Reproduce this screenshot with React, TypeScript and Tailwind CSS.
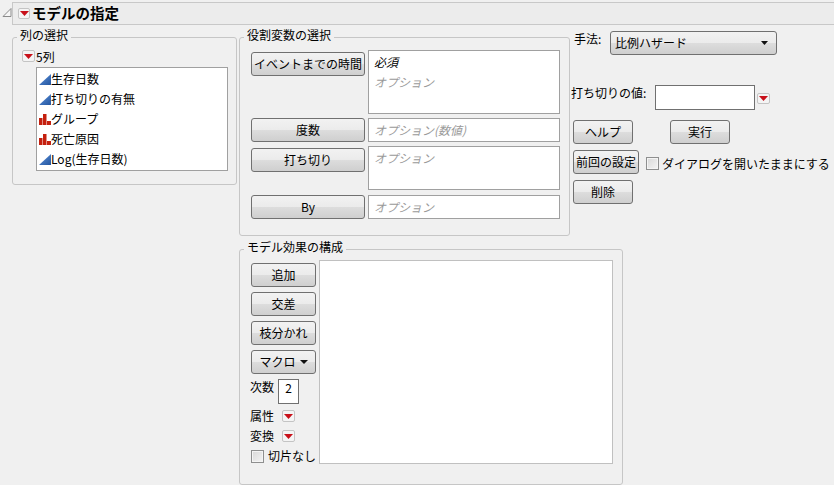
import React from 'react';

const font = { fontFamily: '"Noto Sans CJK JP", "Liberation Sans", sans-serif' };

const btnBase = 'flex h-[24px] shrink-0 items-center whitespace-nowrap rounded-[3px] border border-[#707070] bg-[linear-gradient(#f2f2f2_0%,#ebebeb_50%,#dddddd_50%,#cfcfcf_100%)] text-[12px] leading-none text-black';

const RedMenu: React.FC<{ className?: string }> = ({ className = 'h-[12px] w-[13px]' }) => (
  <span className={`flex shrink-0 items-center justify-center rounded-[2px] border border-[#c4c4c4] bg-[#f4f4f4] ${className}`}>
    <svg width="9" height="5" viewBox="0 0 9 5">
      <path d="M0 0h9L4.5 5z" fill="#c8101a" />
    </svg>
  </span>
);

const Btn: React.FC<{ className?: string; children: React.ReactNode }> = ({ className = '', children }) => (
  <button className={`${btnBase} justify-center ${className}`}>{children}</button>
);

const Group: React.FC<{ title: string; className?: string; children: React.ReactNode }> = ({ title, className = '', children }) => (
  <fieldset className={`shrink-0 rounded-[3px] border border-[#c6c6c6] ${className}`}>
    <legend className="ml-[4px] px-[3px] text-[12px] leading-[14px] text-black">
      <span className="block -translate-y-[2px]">{title}</span>
    </legend>
    {children}
  </fieldset>
);

const Continuous = () => (
  <svg width="12" height="11" viewBox="0 0 12 11" className="shrink-0">
    <defs>
      <linearGradient id="cont" x1="0" y1="0" x2="1" y2="1">
        <stop offset="0" stopColor="#5f93dc" />
        <stop offset="1" stopColor="#23559f" />
      </linearGradient>
    </defs>
    <path d="M0 11L12 0v11z" fill="url(#cont)" />
  </svg>
);

const Nominal = () => (
  <svg width="12" height="11" viewBox="0 0 12 11" className="shrink-0">
    <path d="M0 4h3.5v7H0zM4 0h3.5v11H4zM8 7h4v4H8z" fill="#c4200f" />
  </svg>
);

const Check: React.FC<{ className?: string }> = ({ className = '' }) => (
  <span className={`h-[13px] w-[13px] shrink-0 border border-[#8e8f8f] bg-[linear-gradient(135deg,#d8d8d8,#f4f4f4)] shadow-[inset_0_0_0_1px_#f4f4f4] ${className}`} />
);

const columns = [
  { name: '生存日数', icon: <Continuous /> },
  { name: '打ち切りの有無', icon: <Continuous /> },
  { name: 'グループ', icon: <Nominal /> },
  { name: '死亡原因', icon: <Nominal /> },
  { name: 'Log(生存日数)', icon: <Continuous /> },
];

const Hint: React.FC<{ children: React.ReactNode }> = ({ children }) => <p className="-mt-[2px] italic leading-[17px] text-[#9a9a9a]">{children}</p>;

const App: React.FC = () => (
  <div style={font} className="h-[485px] w-[834px] overflow-hidden bg-[#f0f0f0] text-[12px] text-black">
    {/* title bar */}
    <div className="flex h-[25px] items-start pt-[2px]">
      <svg width="9" height="9" viewBox="0 0 9 9" className="ml-[2px] mt-[6px] w-[10px] shrink-0">
        <path d="M8.5 0.5v8h-8z" fill="#f6f6f6" stroke="#8a8a8a" />
      </svg>
      <div className="flex h-[23px] flex-1 items-center border border-r-0 border-[#c8c8c8] bg-[#ececec] pl-[5px]">
        <RedMenu className="h-[11px] w-[12px]" />
        <span className="ml-[2px] text-[14.5px] font-bold leading-none">モデルの指定</span>
      </div>
    </div>

    <div className="pl-[12px] pt-[5px]">
      <div className="flex items-start">
        {/* columns */}
        <Group title="列の選択" className="h-[155px] w-[225px]">
          <div className="pl-[9px] pt-[6px]">
            <div className="flex h-[12px] items-center">
              <RedMenu />
              <span className="ml-[1px] mt-[2px]">5列</span>
            </div>
            <ul className="ml-[14px] mt-[5px] h-[104px] w-[192px] border border-[#a0a0a0] bg-white pt-[1px]">
              {columns.map(c => (
                <li key={c.name} className="flex h-[20px] items-center pl-[2px]">
                  {c.icon}
                  <span className="leading-none">{c.name}</span>
                </li>
              ))}
            </ul>
          </div>
        </Group>

        {/* roles */}
        <Group title="役割変数の選択" className="ml-[2px] h-[206px] w-[331px]">
          <div className="flex flex-col pl-[11px] pt-[6px]">
            <div className="flex h-[68px] gap-[3px]">
              <Btn className="mt-[2px] w-[114px]">イベントまでの時間</Btn>
              <div className="h-[64px] w-[192px] border border-[#a0a0a0] bg-white px-[5px] pt-[2px]">
                <p className="italic leading-[17px] text-black">必須</p>
                <div className="mt-[5px]"><Hint>オプション</Hint></div>
              </div>
            </div>
            <div className="flex h-[28px] gap-[3px]">
              <Btn className="w-[114px]">度数</Btn>
              <div className="flex h-[24px] w-[192px] items-center border border-[#a0a0a0] bg-white px-[5px]"><Hint>オプション(数値)</Hint></div>
            </div>
            <div className="flex h-[49px] gap-[3px]">
              <Btn className="mt-[2px] w-[114px]">打ち切り</Btn>
              <div className="h-[44px] w-[192px] border border-[#a0a0a0] bg-white px-[5px] pt-[4px]"><Hint>オプション</Hint></div>
            </div>
            <div className="flex h-[24px] gap-[3px]">
              <Btn className="w-[114px]">By</Btn>
              <div className="flex h-[24px] w-[192px] items-center border border-[#a0a0a0] bg-white px-[5px]"><Hint>オプション</Hint></div>
            </div>
          </div>
        </Group>

        {/* options */}
        <div className="ml-[3px] flex w-[261px] shrink-0 flex-col pt-[1px]">
          <div className="flex items-start">
            <span className="ml-[1px] w-[36px] leading-[16px]">手法:</span>
            <button className={`${btnBase} w-[167px] justify-between pl-[4px] pr-[8px]`}>
              <span>比例ハザード</span>
              <svg width="7" height="4" viewBox="0 0 7 4"><path d="M0 0h7L3.5 4z" fill="#111" /></svg>
            </button>
          </div>
          <div className="mt-[30px] flex items-start">
            <span className="-ml-[2px] w-[84px] leading-[16px]">打ち切りの値:</span>
            <span className="h-[25px] w-[100px] border border-[#707070] bg-white" />
            <RedMenu className="ml-[2px] mt-[8px] h-[11px] w-[13px]" />
          </div>
          <div className="mt-[10px] flex gap-[37px]">
            <Btn className="w-[60px]">ヘルプ</Btn>
            <Btn className="w-[60px]">実行</Btn>
          </div>
          <div className="mt-[6px] flex items-center">
            <Btn className="w-[66px]">前回の設定</Btn>
            <Check className="ml-[7px] mt-[3px]" />
            <span className="ml-[3px] mt-[3px] whitespace-nowrap">ダイアログを開いたままにする</span>
          </div>
          <Btn className="mt-[6px] w-[60px]">削除</Btn>
        </div>
      </div>

      {/* model effects */}
      <Group title="モデル効果の構成" className="ml-[227px] mt-[6px] h-[243px] w-[384px]">
        <div className="flex gap-[3px] pl-[11px] pt-[4px]">
          <div className="flex w-[65px] flex-col">
            <div className="flex flex-col gap-[5px] pt-[3px]">
              <Btn className="w-[65px]">追加</Btn>
              <Btn className="w-[65px]">交差</Btn>
              <Btn className="w-[65px]">枝分かれ</Btn>
              <Btn className="w-[65px] gap-[4px]">
                マクロ
                <svg width="8" height="4" viewBox="0 0 8 4"><path d="M0 0h8L4 4z" fill="#111" /></svg>
              </Btn>
            </div>
            <div className="mt-[5px] flex items-start">
              <span className="-ml-[1px] w-[28px] leading-[16px]">次数</span>
              <span className="h-[25px] w-[21px] border border-[#707070] bg-white text-center leading-[16px]">2</span>
            </div>
            <div className="mt-[2px] flex h-[20px] items-center">
              <span className="-ml-[1px] w-[32px]">属性</span>
              <RedMenu />
            </div>
            <div className="flex h-[20px] items-center">
              <span className="-ml-[1px] w-[32px]">変換</span>
              <RedMenu />
            </div>
            <div className="mt-[1px] flex h-[18px] items-center gap-[4px] whitespace-nowrap">
              <Check />
              <span>切片なし</span>
            </div>
          </div>
          <div className="h-[204px] w-[294px] border border-[#c0c0c0] bg-white" />
        </div>
      </Group>
    </div>
  </div>
);

export default App;
